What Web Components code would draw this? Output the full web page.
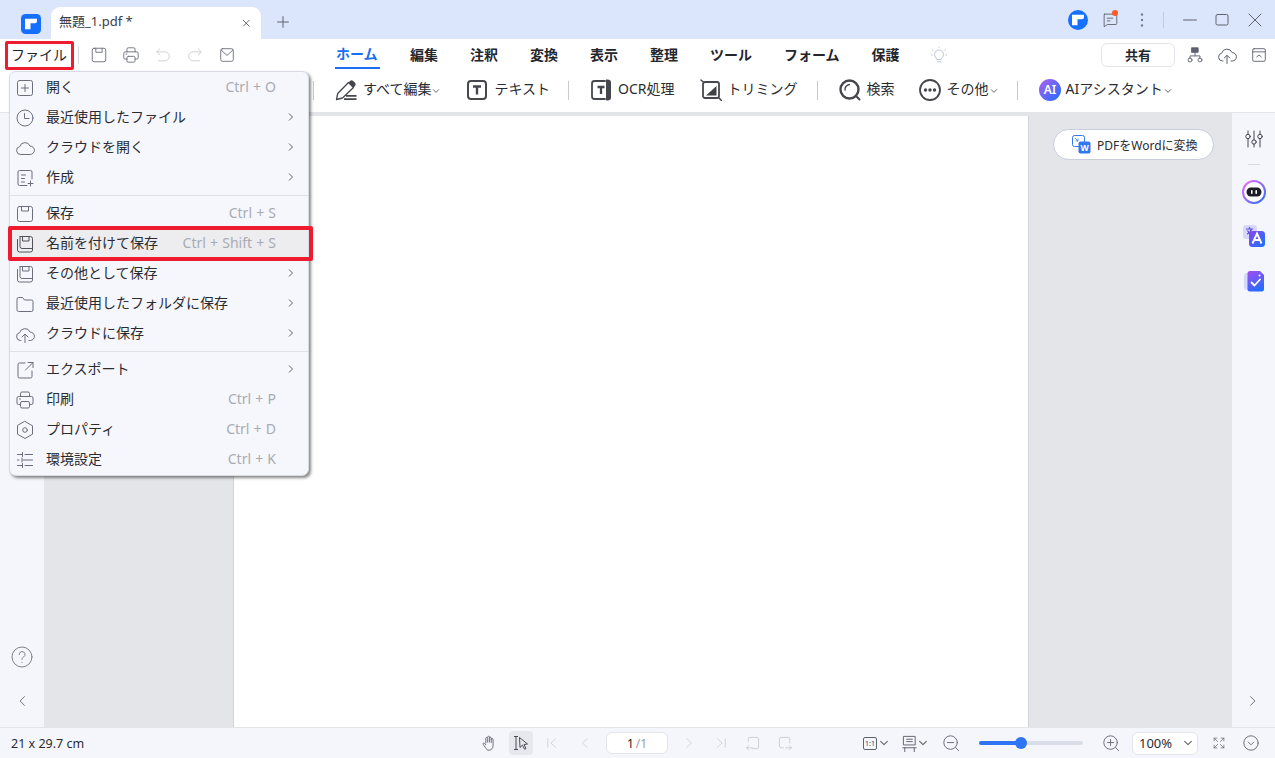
<!DOCTYPE html>
<html lang="ja"><head><meta charset="utf-8"><title>無題_1.pdf</title>
<style>
html,body{margin:0;height:100%;overflow:hidden}
body{font:14px "Noto Sans","Noto Sans CJK JP",sans-serif;color:#23262d;background:#fff}
pdf-app{height:758px}
</style></head><body>
<pdf-app></pdf-app>
<script>
const FONT='"Noto Sans","Noto Sans CJK JP",sans-serif';
const svg=(w,h,vb,body,extra='')=>`<svg width="${w}" height="${h}" viewBox="${vb}" fill="none" stroke-linecap="round" stroke-linejoin="round" ${extra}>${body}</svg>`;
const P={
 open:'<rect x="2.5" y="2.5" width="15" height="15" rx="2"/><path d="M10 6.5v7M6.5 10h7"/>',
 clock:'<circle cx="10" cy="10" r="8"/><path d="M9.5 5.5v5h4.5"/>',
 cloud:'<path d="M5.5 16.5a4 4 0 0 1-.8-7.900 5.500 5.500 0 0 1 10.400-.5 4.200 4.200 0 0 1 .2 8.400z"/>',
 create:'<path d="M17 11V4a1.500 1.500 0 0 0-1.500-1.500h-11A1.500 1.500 0 0 0 3 4v12a1.500 1.500 0 0 0 1.500 1.500H12"/><path d="M6.500 7h4M6.500 10.500h3M6.500 14h3M15.500 13v5M13 15.500h5"/>',
 save:'<rect x="2.500" y="2.500" width="15" height="15" rx="2"/><path d="M6.500 2.500V7h7V2.500"/>',
 saveas:'<path d="M5 2.500h10.500a2 2 0 0 1 2 2v10"/><path d="M5 2.500v10a2 2 0 0 0 2 2h10.500"/><path d="M7.500 2.500V7h6.500V2.500"/><path d="M2.500 5.500V16a2 2 0 0 0 2 2h11a2 2 0 0 0 2-2v-1.500"/>',
 folder:'<path d="M2 5a1.500 1.500 0 0 1 1.500-1.500h4l2 2.500h7A1.500 1.500 0 0 1 18 7.500V16a1.500 1.500 0 0 1-1.500 1.500h-13A1.500 1.500 0 0 1 2 16z"/>',
 cloudup:'<path d="M6 16.500H5.500a4 4 0 0 1-.8-7.900 5.500 5.500 0 0 1 10.400-.5 4.200 4.200 0 0 1 .2 8.400H14"/><path d="M10 18.500V10.500M7 13l3-3 3 3"/>',
 export:'<path d="M10 3H4.500A1.500 1.500 0 0 0 3 4.500v12A1.500 1.500 0 0 0 4.500 18h11a1.500 1.500 0 0 0 1.500-1.500V11"/><path d="M10.500 10L18 2.500M13 2.500h5V7.500"/>',
 print:'<path d="M5.500 6.500V3.500a1.500 1.500 0 0 1 1.500-1.500h6a1.500 1.500 0 0 1 1.500 1.500v3"/><path d="M5.500 14.500H3.500A1.500 1.500 0 0 1 2 13V8a1.500 1.500 0 0 1 1.500-1.500h13A1.500 1.500 0 0 1 18 8v5a1.500 1.500 0 0 1-1.500 1.500h-2"/><rect x="5.500" y="11.500" width="9" height="6.500" rx="1.500"/><path d="M4.500 9h1"/>',
 hex:'<path d="M10 1.500l7.500 4.300v8.400L10 18.500l-7.500-4.300V5.800z"/><circle cx="10" cy="10" r="2.300"/>',
 prefs:'<path d="M2.500 4.500H7M10 4.500h7.500M7.500 2.500v4M2.500 10H4M8 10h9.500M7 8v4M2.500 15.500H7M10 15.500h7.500M7.500 13.500v4"/>',
 undo:'<path d="M6.500 3L3 6.500 6.500 10"/><path d="M3.500 6.500H12a5 5 0 0 1 0 10H5"/>',
 redo:'<path d="M13.500 3L17 6.500 13.500 10"/><path d="M16.500 6.500H8a5 5 0 0 0 0 10h7"/>',
 mail:'<rect x="3" y="3" width="14" height="14" rx="2"/><path d="M3.500 4.500L10 10.500l6.500-6"/>',
 hand:'<path d="M6.500 10V4.800a1 1 0 0 1 2 0V9m0-5.500a1 1 0 0 1 2 0V9m0-4.500a1 1 0 0 1 2 0V9.500m0-3.500a1 1 0 0 1 2 0v7c0 3-2 5-4.500 5S7.500 17 6 15l-2.500-3.500c-.6-1 .7-2 1.500-1.200L6.500 12"/>',
 first:'<path d="M4 4v12M15 4L8.500 10 15 16"/>',prev:'<path d="M13 4L6.500 10 13 16"/>',next:'<path d="M7 4l6.500 6L7 16"/>',last:'<path d="M16 4v12M5 4l6.500 6L5 16"/>',
 pgprev:'<path d="M4 8V5a2 2 0 0 1 2-2h9a2 2 0 0 1 2 2v10a2 2 0 0 1-2 2H9M2 16h7M4.500 13.500L2 16l2.500 2.500"/>',
 pgnext:'<path d="M3 14V5a2 2 0 0 1 2-2h9a2 2 0 0 1 2 2v5M3 14a2 2 0 0 0 2 2h3M11 16h7M15.500 13.500L18 16l-2.500 2.500"/>',
 zoomout:'<circle cx="9.500" cy="9.500" r="7.500"/><path d="M6 9.500h7M15 15l3.500 3.500"/>',
 zoomin:'<circle cx="9.500" cy="9.500" r="7.500"/><path d="M6 9.500h7M9.500 6v7M15 15l3.500 3.500"/>',
 fit:'<path d="M3 7V3h4M3 3l5 5M13 3h4v4M17 3l-5 5M3 13v4h4M3 17l5-5M13 17h4v-4M17 17l-5-5"/>',
 circdown:'<circle cx="10" cy="10" r="8"/><path d="M7 9l3 3 3-3"/>',
 pagefit:'<path d="M4 2.500h12v9H4zM7 5.500h6M7 8h6M3 14.500h14M5 14.500v4M15 14.500v4"/>',
 help:'<circle cx="11" cy="11" r="10"/><path d="M8.200 8.500a2.900 2.900 0 1 1 4.300 2.500c-1 .6-1.500 1.100-1.500 2.300"/><path d="M11 16.200v.2"/>',
 ltr:'<path d="M13 5L7 11l6 6"/>',rtl:'<path d="M9 5l6 6-6 6"/>',
 sliders:'<path d="M4 2v3M4 10v8M10 2v9M10 15v3M16 2v3M16 10v8"/><circle cx="4" cy="7.500" r="2.200"/><circle cx="10" cy="13" r="2.200"/><circle cx="16" cy="7.500" r="2.200"/>',
 org:'<rect x="6.500" y="2" width="7" height="5" fill="currentColor"/><path d="M10 7v4M4.500 14v-3h11v3"/><circle cx="4.500" cy="15.500" r="2.200"/><circle cx="15.500" cy="15.500" r="2.200"/>',
 upload:'<path d="M6 16H5.500a4 4 0 0 1-.8-7.900 5.500 5.500 0 0 1 10.400-.5 4.200 4.200 0 0 1 .2 8.400H14"/><path d="M10 18.500V10.500M7.300 13L10 10.300l2.700 2.700"/>',
 panel:'<rect x="3" y="3" width="14" height="14" rx="1.500"/><path d="M3 6.500h14M7.500 12l2.500-2 2.500 2"/>',
 bulb:'<path d="M6.500 13a5 5 0 1 1 7 0c-.7.7-1 1.200-1 2h-5c0-.8-.3-1.300-1-2zM8 17.500h4M10 1v.5M2.500 4l1 .8M17.500 4l-1 .8M1.500 10h1M17.500 10h1"/>',
 chat:'<path d="M4 3.500h12.500a1 1 0 0 1 1 1v9.500a1 1 0 0 1-1 1H7l-3.500 2.500V4a.5.5 0 0 1 .5-.5z"/><path d="M7 8h6M7 11h3"/>',
 dots:'<circle cx="10" cy="4.500" r="1.200" fill="currentColor" stroke="none"/><circle cx="10" cy="10" r="1.200" fill="currentColor" stroke="none"/><circle cx="10" cy="15.500" r="1.200" fill="currentColor" stroke="none"/>',
 min:'<path d="M3.500 10h13"/>',max:'<rect x="4" y="4.500" width="12" height="10.500" rx="1.500"/>',close:'<path d="M4 4l12 12M16 4L4 16"/>',
 plus:'<path d="M10 4v12M4 10h12"/>',x:'<path d="M5 5l7 7M12 5l-7 7"/>',
 editall:'<path d="M1.500 20.500l1.200-6L13.500 3.500l5 5L7.500 19z" stroke-width="1.300"/><path d="M13.500 3.500l1.500-1.500a2.300 2.300 0 0 1 3.200 0l1.800 1.800a2.300 2.300 0 0 1 0 3.200l-1.500 1.500z" fill="#45474c" stroke="none"/><path d="M11 16.800h10.500M9 20.200h12.500" stroke-width="1.800" stroke-linecap="butt"/>',
 text:'<rect x="2" y="2" width="18" height="18" rx="3" stroke-width="2"/><path d="M7 7.500h8M11 7.500v8" stroke-width="2.400" stroke-linecap="butt"/>',
 ocr:'<path d="M15 2H4.500A2.500 2.500 0 0 0 2 4.500v13A2.500 2.500 0 0 0 4.500 20H15" stroke-width="1.800"/><path d="M7.500 8h7M11 8v7" stroke-width="2.300" stroke-linecap="butt"/><path d="M16 0.500h1.500a3.500 3 0 0 1 3.500 3v15a3.500 3 0 0 1-3.500 3H16z" fill="#45474c" stroke="none"/>',
 crop:'<rect x="3" y="3" width="16" height="16" rx="2" stroke-width="1.800"/><path d="M16.500 7v9.500H6z" fill="#3f4146" stroke="none"/><path d="M1 1l3 2.500M19 19l2.500 2.500" stroke-width="1.500"/>',
 search:'<circle cx="10.500" cy="10.500" r="9" stroke-width="2.400"/><path d="M6 11a5 5 0 0 1 4.500-5.500" stroke-width="1.400"/><path d="M17 17l3.500 3.500" stroke-width="2"/>',
 more:'<circle cx="11" cy="11" r="10" stroke-width="1.800"/><circle cx="6.500" cy="11" r="1.700" fill="currentColor" stroke="none"/><circle cx="11" cy="11" r="1.700" fill="currentColor" stroke="none"/><circle cx="15.500" cy="11" r="1.700" fill="currentColor" stroke="none"/>'
};
const V22=new Set(['editall','text','ocr','crop','search','more','help','ltr','rtl']);
const ic=(n,s=20,sw=1,c='currentColor')=>svg(s,s,V22.has(n)?'0 0 22 22':'0 0 20 20',P[n],`stroke="${c}" stroke-width="${sw}" style="color:${c};display:block;flex:none"`);
const logo=(s,round)=>svg(s,s,'0 0 20 20',`${round?'<circle cx="10" cy="10" r="10" fill="#1570ff"/>':'<rect width="20" height="20" rx="4.500" fill="#1570ff"/>'}<path d="M4 4.800h12v2.500a2 2 0 0 1-2 2H9.500v5.900H4z" fill="#fff"/>`,'style="display:block;flex:none"');
const chev=(c='#555',w=9)=>svg(w,w,'0 0 9 9',`<path d="M1.500 3L4.500 6 7.500 3"/>`,`stroke="${c}" stroke-width="1" style="display:block;flex:none"`);
const def=(name,css,html)=>customElements.define(name,class extends HTMLElement{connectedCallback(){if(this.shadowRoot)return;const r=this.attachShadow({mode:'open'});r.innerHTML=`<style>${css}</style>`+(typeof html==='function'?html(this):html);}});

def('pdf-cell',':host{display:flex;align-items:center;justify-content:center;flex:none}',e=>{
 const w=e.getAttribute('w')||32,g=e.getAttribute('i'),s=+(e.getAttribute('s')||20),c=e.getAttribute('c')||'#5f636e';
 e.style.width=w+'px';return ic(g,s,+(e.getAttribute('sw')||1),c)+'<slot></slot>';});

def('pdf-titlebar',`:host{display:flex;align-items:flex-end;height:39px;background:#dbe5fb;flex:none}
 .logo{align-self:flex-start;margin:14px 10px 0 21px}
 .tab{width:210px;height:32px;background:#fff;border-radius:9px 9px 0 0;display:flex;align-items:center;box-sizing:border-box;padding:0 5px 0 8px;font-size:13px;color:#3a3d45}
 .tab span{flex:1;margin-top:-5px}.tab svg{margin-top:2px}
 .plus{align-self:flex-start;margin:13px 0 0 13px}
 .sp{flex:1}.r{display:flex;align-items:center;height:39px;padding-right:3px}
 .badge{width:32px;height:20px;display:flex;justify-content:center;position:relative;margin-top:2px}
 .dot{position:absolute;left:18px;top:-1px;width:6px;height:6px;background:#ff5a1f;border-radius:50%}
 .v{width:1px;height:16px;background:#c3cbdc;margin:0 10px 0 5px}
 pdf-cell{height:20px}`,
 `<div class="logo">${logo(20)}</div>
 <div class="tab"><span>無題_1.pdf *</span>${ic('x',17,1,'#555')}</div>
 <div class="plus">${ic('plus',18,1.100,'#5b6170')}</div><div class="sp"></div>
 <div class="r"><div style="width:20px;margin-right:6px;margin-top:1px">${logo(20,1)}</div>
 <div class="badge">${ic('chat',18,1,'#5f636e')}<i class="dot"></i></div>
 <pdf-cell w="32" i="dots" c="#7a7e88"></pdf-cell><div class="v"></div>
 <pdf-cell w="32" i="min" c="#5f636e"></pdf-cell><pdf-cell w="32" i="max" c="#5f636e"></pdf-cell><pdf-cell w="34" i="close" c="#5f636e"></pdf-cell></div>`);

def('pdf-menubar',`:host{display:flex;align-items:center;height:31px;background:#fff;flex:none}
 .file{margin-left:11px;width:56px;font-size:14px;line-height:20px;flex:none}
 .v{width:1px;height:18px;background:#d5d7dd;margin:0 4px 0 11px;flex:none}
 .tools{display:flex;width:157px;margin-right:96px;flex:none}
 nav{display:flex;gap:32px;font-size:14px;font-weight:700;color:#24262c;height:31px;flex:none}
 nav span{display:flex;align-items:center;height:29px;box-sizing:border-box;white-space:nowrap}
 nav .on{color:#1a6ef0;border-bottom:2px solid #1a6ef0;height:30px;margin-left:-1px;padding-left:1px;width:45px;margin-right:-2px}
 .bulb{margin-left:30px;flex:none}
 .sp{flex:1}
 .share{width:74px;height:24px;border:1px solid #e2e4ea;border-radius:6px;box-sizing:border-box;display:flex;align-items:center;justify-content:center;font-weight:700;font-size:13px;margin-right:4px;flex:none}
 .r{display:flex;padding-right:0}`,
 `<div class="file">ファイル</div><div class="v"></div>
 <div class="tools"><pdf-cell w="32" i="save" s="18" c="#6a6e7a"></pdf-cell><pdf-cell w="32" i="print" s="18" c="#6a6e7a"></pdf-cell><pdf-cell w="32" i="undo" s="18" c="#c9ccd3"></pdf-cell><pdf-cell w="32" i="redo" s="18" c="#c9ccd3"></pdf-cell><pdf-cell w="32" i="mail" s="18" c="#6a6e7a"></pdf-cell></div>
 <nav><span class="on">ホーム</span><span>編集</span><span>注釈</span><span>変換</span><span>表示</span><span>整理</span><span>ツール</span><span>フォーム</span><span>保護</span></nav>
 <div class="bulb">${ic('bulb',18,1,'#b9bcdc')}</div><div class="sp"></div>
 <div class="share">共有</div>
 <div class="r"><pdf-cell w="32" i="org" s="18" c="#5c6070"></pdf-cell><pdf-cell w="32" i="upload" s="20" c="#5c6070"></pdf-cell><pdf-cell w="32" i="panel" s="18" c="#5c6070"></pdf-cell></div>`);

def('tool-btn',`:host{display:flex;align-items:center;flex:none;font-size:14px;color:#2a2c32;white-space:nowrap}
 .i{margin-right:6px;color:#45474c}
 :host([i=ai]) .i{margin-right:5px}
 .l{margin-bottom:4px}`,
 e=>`<div class="i">${e.getAttribute('i')==='ai'
  ?`<svg width="22" height="22" viewBox="0 0 22 22" style="display:block"><defs><linearGradient id="g" x1="0" y1="0" x2="1" y2="1"><stop offset="0" stop-color="#b060ee"/><stop offset="1" stop-color="#1f6dff"/></linearGradient></defs><circle cx="11" cy="11" r="11" fill="url(#g)"/><text x="11" y="15.200" text-anchor="middle" font-size="12" font-weight="600" fill="#fff" font-family="Noto Sans">AI</text></svg>`
  :ic(e.getAttribute('i'),22,1.200,'#45474c')}</div><div class="l"><slot></slot></div>${e.hasAttribute('chev')?`<span style="margin-left:1px;margin-top:1px">${chev('#555',8)}</span>`:''}`);

def('pdf-ribbon',`:host{display:flex;align-items:center;height:43px;box-sizing:border-box;background:#fff;border-bottom:1px solid #e2e4e9;flex:none;padding:0 0 2px 313px}
 i{display:block;width:1px;height:19px;background:#c8cad0;flex:none}`,
 `<i></i><tool-btn i="editall" chev style="margin-left:21px">すべて編集</tool-btn>
 <tool-btn i="text" style="margin-left:26px">テキスト</tool-btn><i style="margin-left:18px"></i>
 <tool-btn i="ocr" style="margin-left:21px">OCR処理</tool-btn>
 <tool-btn i="crop" style="margin-left:25px">トリミング</tool-btn><i style="margin-left:19px"></i>
 <tool-btn i="search" style="margin-left:21px">検索</tool-btn>
 <tool-btn i="more" chev style="margin-left:24px">その他</tool-btn><i style="margin-left:19px"></i>
 <tool-btn i="ai" chev style="margin-left:21px">AIアシスタント</tool-btn>`);

def('pdf-left-rail',`:host{display:flex;flex-direction:column;align-items:center;width:44px;background:#f5f6fb;flex:none;box-sizing:border-box;padding-bottom:18px}
 .sp{flex:1}.h{margin-bottom:25px}.c{margin-left:2px}`,
 `<div class="sp"></div><div class="h">${ic('help',22,1,'#80838c')}</div><div class="c">${ic('ltr',16,1.300,'#6a6e78')}</div>`);

def('pdf-right-rail',`:host{display:flex;flex-direction:column;align-items:center;width:43px;background:#f5f6fb;flex:none;box-sizing:border-box;padding-top:16px;padding-bottom:18px}
 .sp{flex:1}.l{width:12px;height:1px;background:#d8dae0;margin:15px 0 15px}
 .c{margin-left:-4px}
 svg{display:block}`,
 `${ic('sliders',20,1,'#444750')}<div class="l"></div>
 <svg width="24" height="24" viewBox="0 0 24 24" style="margin-bottom:20px"><defs><linearGradient id="a" x1="0" y1="0" x2="1" y2="1"><stop offset="0" stop-color="#f070f0"/><stop offset="1" stop-color="#2d6cff"/></linearGradient></defs><circle cx="12" cy="12" r="11" fill="#fff" stroke="url(#a)" stroke-width="2"/><rect x="4.500" y="7.500" width="15" height="9" rx="4.500" fill="#1c1d26"/><rect x="9" y="10" width="1.600" height="4" rx=".8" fill="#fff"/><rect x="13.400" y="10" width="1.600" height="4" rx=".8" fill="#fff"/></svg>
 <svg width="24" height="24" viewBox="0 0 24 24" style="margin-bottom:22px"><defs><linearGradient id="b" x1="0" y1="0" x2="1" y2="1"><stop offset="0" stop-color="#8c45f0"/><stop offset="1" stop-color="#1473ff"/></linearGradient></defs><rect x="1" y="1" width="14" height="14" rx="3" fill="#d7d8f8"/><path d="M4 5h7M7.500 3v2M5 10c3-1 4-3 4.500-5M5.500 6.500c.8 2 2 3 4 4" stroke="#5a4ee0" stroke-width="1.200" fill="none"/><rect x="7" y="7" width="16" height="16" rx="3.500" fill="url(#b)"/><path d="M10.500 19.500l4.500-10 4.500 10M12.300 16h5.500" stroke="#fff" stroke-width="1.900" fill="none"/></svg>
 <svg width="22" height="22" viewBox="0 0 22 22" style="margin-bottom:0"><defs><linearGradient id="c" x1=".3" y1="0" x2=".7" y2="1"><stop offset="0" stop-color="#9a50f0"/><stop offset="1" stop-color="#1f6dff"/></linearGradient></defs><rect x="1" y="3" width="14" height="17" rx="3" fill="#d5d9f8"/><path d="M7 1h10l4 4v14a2.500 2.500 0 0 1-2.500 2.500H7A2.500 2.500 0 0 1 4.500 19V3.500A2.500 2.500 0 0 1 7 1z" fill="url(#c)"/><path d="M8.500 12.500l3 3 5.500-6" stroke="#fff" stroke-width="1.800" fill="none" stroke-linecap="round" stroke-linejoin="round"/><circle cx="16.500" cy="5.500" r="1" fill="#fff"/></svg>
 <div class="sp"></div><div class="c">${ic('rtl',16,1.300,'#6a6e78')}</div>`);

def('pdf-doc',`:host{display:flex;flex:1;min-width:0;background:#e4e5e9}
 .page{width:794px;margin:3px 0 0 189px;background:#fff;border-left:1px solid #d2d4d9;border-right:1px solid #d2d4d9;flex:none}
 .side{flex:1;padding:16px 0 0 24px}
 .btn{width:161px;height:31px;box-sizing:border-box;background:#fff;border:1px solid #c9ccdc;border-radius:16px;display:flex;align-items:center;padding-left:18px;gap:6px;font-size:12px;color:#2a2c32;white-space:nowrap}`,
 `<div class="page"></div><div class="side"><div class="btn">
 <svg width="19" height="19" viewBox="0 0 19 19" style="flex:none;display:block"><rect x=".5" y=".5" width="12" height="11" rx="2" fill="#fff" stroke="#3277f0"/><path d="M3 3l3 3M6 3.500V6H3.500" stroke="#3277f0" stroke-width=".8" fill="none"/><rect x="6.500" y="6.500" width="12" height="12" rx="2" fill="#3277f0"/><text x="12.500" y="16" text-anchor="middle" font-size="8.500" font-weight="700" fill="#fff" font-family="Noto Sans">W</text></svg>
 <span>PDFをWordに変換</span></div></div>`);

def('pdf-menu-item',`:host{display:flex;align-items:center;height:30px;box-sizing:border-box;padding-left:5px;font-size:14px;color:#2a2c32;white-space:nowrap}
 :host([active]){background:#ededef}
 .t{margin-left:11px;flex:1;margin-bottom:4px}
 .s{color:#a8abb3;font-size:14px;word-spacing:.5px;margin:0 32px 4px 0}
 .a{width:8px;margin:0 13px 2px 0;display:flex}
 svg{display:block}`,
 e=>`${ic(e.getAttribute('i'),20,1,e.hasAttribute('active')?'#4f525c':'#6b6f7b')}<div class="t"><slot></slot></div>${e.hasAttribute('k')?`<div class="s">${e.getAttribute('k')}</div>`:''}${e.hasAttribute('more')?`<div class="a"><svg width="8" height="10" viewBox="0 0 8 10" fill="none" stroke="#5f636e"><path d="M2 1.500L5.500 5 2 8.500"/></svg></div>`:''}`);

def('pdf-file-menu',`:host{position:absolute;left:9px;top:71px;width:300px;box-sizing:border-box;height:405px;padding-top:1px;background:#f6f7fc;border:1px solid #d9dbe2;border-radius:7px;box-shadow:2px 2px 3px rgba(40,40,40,.55)}`,
 `<slot></slot>`);
def('menu-sep',':host{display:block;height:6px;box-sizing:border-box;padding-top:2px}div{height:1px;background:#dfe1e6}','<div></div>');

def('pdf-statusbar',`:host{display:flex;align-items:center;height:31px;box-sizing:border-box;background:#f5f6fb;border-top:1px solid #e2e4e9;flex:none;padding-left:11px;font-size:12.500px;color:#2a2c32}
 .size{width:462px;flex:none;white-space:nowrap}
 .sel{background:#e6e8ee;border-radius:4px;width:24px;height:24px;display:flex;align-items:center;justify-content:center;margin-left:4px;flex:none}
 .pg{width:62px;height:22px;box-sizing:border-box;background:#fff;border:1px solid #e3e5ea;border-radius:6px;display:flex;align-items:center;justify-content:center;margin:0 5px 0 4px;font-size:12px;color:#222;flex:none}
 .pg em{font-style:normal;color:#9a9ca5;margin-left:2px}
 .track{width:104px;height:4px;background:#d9dde8;border-radius:2px;display:flex;align-items:center;margin:0 19px;flex:none}
 .fill{width:42px;height:4px;background:#2e74f5;border-radius:2px}
 .knob{width:12px;height:12px;border-radius:50%;background:#2e74f5;margin-left:-6px;flex:none}
 .pct{width:66px;height:23px;box-sizing:border-box;background:#fff;border:1px solid #e3e5ea;border-radius:6px;display:flex;align-items:center;justify-content:space-between;padding:0 4px 0 6px;font-size:13px;flex:none}
 .c{flex:none;display:flex;align-items:center;justify-content:center}
 .r11{width:14px;height:13px;margin-left:62px;border:1px solid #5f636e;border-radius:2px;box-sizing:border-box;font-size:7px;line-height:1;color:#444}`,
 `<div class="size">21 x 29.7 cm</div>
 <pdf-cell w="32" i="hand" s="18" c="#5f636e"></pdf-cell>
 <div class="sel"><svg width="18" height="18" viewBox="0 0 18 18" fill="none" stroke="#4a4d56" style="display:block"><path d="M2 2.500h4M2 15.500h4M4 2.500v13"/><path d="M7.500 3.500l8 6.500-3.500.5 2 4-1.500.7-2-4L8 13.500z"/></svg></div>
 <pdf-cell w="32" i="first" s="14" c="#c3c6ce" style="margin-left:3px"></pdf-cell><pdf-cell w="33" i="prev" s="14" c="#c3c6ce"></pdf-cell>
 <div class="pg" style="margin-left:5px">1<em>/1</em></div>
 <pdf-cell w="32" i="next" s="14" c="#c3c6ce"></pdf-cell><pdf-cell w="31" i="last" s="14" c="#c3c6ce"></pdf-cell>
 <pdf-cell w="33" i="pgprev" s="16" c="#c3c6ce"></pdf-cell><pdf-cell w="32" i="pgnext" s="16" c="#c3c6ce"></pdf-cell>
 <div class="c r11">1:1</div>
 <div class="c" style="margin:0 11px 0 2px">${chev('#666',10)}</div>
 ${ic('pagefit',19,1,'#5f636e')}<div class="c" style="margin:0 14px 0 -1px">${chev('#666',10)}</div>
 ${ic('zoomout',18,1,'#5f636e')}
 <div class="track"><div class="fill"></div><div class="knob"></div></div>
 ${ic('zoomin',18,1,'#5f636e')}
 <div class="pct" style="margin-left:12px">100%${chev('#666',10)}</div>
 <pdf-cell w="32" i="fit" s="14" c="#5f636e" style="margin-left:5px"></pdf-cell><pdf-cell w="32" i="circdown" s="18" c="#5f636e"></pdf-cell>`);

def('pdf-highlight',`:host{position:absolute;box-sizing:border-box;border:3px solid #ee1c2e;border-radius:2px;pointer-events:none}`,'');

def('pdf-app',`:host{display:flex;flex-direction:column;position:relative;width:1275px;overflow:hidden;font-family:${FONT}}
 .main{display:flex;flex:1;min-height:0}`,
 `<pdf-titlebar></pdf-titlebar><pdf-menubar></pdf-menubar><pdf-ribbon></pdf-ribbon>
 <div class="main"><pdf-left-rail></pdf-left-rail><pdf-doc></pdf-doc><pdf-right-rail></pdf-right-rail></div>
 <pdf-statusbar></pdf-statusbar>
 <pdf-file-menu>
  <pdf-menu-item i="open" k="Ctrl + O">開く</pdf-menu-item>
  <pdf-menu-item i="clock" more>最近使用したファイル</pdf-menu-item>
  <pdf-menu-item i="cloud" more>クラウドを開く</pdf-menu-item>
  <pdf-menu-item i="create" more>作成</pdf-menu-item>
  <menu-sep></menu-sep>
  <pdf-menu-item i="save" k="Ctrl + S">保存</pdf-menu-item>
  <pdf-menu-item i="saveas" k="Ctrl + Shift + S" active>名前を付けて保存</pdf-menu-item>
  <pdf-menu-item i="saveas" more>その他として保存</pdf-menu-item>
  <pdf-menu-item i="folder" more>最近使用したフォルダに保存</pdf-menu-item>
  <pdf-menu-item i="cloudup" more>クラウドに保存</pdf-menu-item>
  <menu-sep></menu-sep>
  <pdf-menu-item i="export" more>エクスポート</pdf-menu-item>
  <pdf-menu-item i="print" k="Ctrl + P">印刷</pdf-menu-item>
  <pdf-menu-item i="hex" k="Ctrl + D">プロパティ</pdf-menu-item>
  <pdf-menu-item i="prefs" k="Ctrl + K">環境設定</pdf-menu-item>
 </pdf-file-menu>
 <pdf-highlight style="left:5px;top:41px;width:69px;height:29px"></pdf-highlight>
 <pdf-highlight style="left:8px;top:226px;width:305px;height:35px;border-width:4px"></pdf-highlight>`);
</script>
</body></html>
